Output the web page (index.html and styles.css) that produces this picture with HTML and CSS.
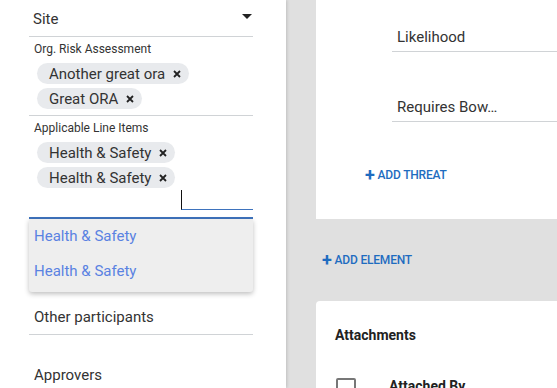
FILE: index.html
```html
<html>
    <head>
        <link rel="stylesheet" href="styles.css">
    </head>
    <body>
        <div class="side">
            <div class="field select">
                <span>Site</span>
                <span class="caret"></span>
            </div>
            <div class="field multi">
                <div class="label">Org. Risk Assessment</div>
                <div class="chips">
                    <span class="chip">Another great ora <svg class="x" viewBox="0 0 8 8"><path d="M1 1L7 7M7 1L1 7"/></svg></span>
                    <span class="chip">Great ORA <svg class="x" viewBox="0 0 8 8"><path d="M1 1L7 7M7 1L1 7"/></svg></span>
                </div>
            </div>
            <div class="field multi active">
                <div class="label">Applicable Line Items</div>
                <div class="chips">
                    <span class="chip">Health &amp; Safety <svg class="x" viewBox="0 0 8 8"><path d="M1 1L7 7M7 1L1 7"/></svg></span>
                    <span class="chip">Health &amp; Safety <svg class="x" viewBox="0 0 8 8"><path d="M1 1L7 7M7 1L1 7"/></svg></span>
                    <span class="typing"></span>
                </div>
            </div>
            <div class="menu">
                <div class="option">Health &amp; Safety</div>
                <div class="option">Health &amp; Safety</div>
            </div>
            <div class="field plain">Other participants</div>
            <div class="field plain last">Approvers</div>
        </div>
        <div class="main">
            <div class="card top">
                <div class="row">Likelihood</div>
                <div class="row">Requires Bow&hellip;</div>
                <div class="add threat"><span class="plus">+</span>ADD THREAT</div>
            </div>
            <div class="add element"><span class="plus">+</span>ADD ELEMENT</div>
            <div class="card bottom">
                <h3>Attachments</h3>
                <div class="head">
                    <span class="check"></span>
                    <span>Attached By</span>
                </div>
            </div>
        </div>
    </body>
</html>
```

FILE: styles.css
```css
body {
    margin: 0;
    display: flex;
    height: 388px;
    overflow: hidden;
    font-family: Roboto, "Liberation Sans", sans-serif;
    color: #333;
    background-color: #e0e0e0;
}
.side {
    width: 286px;
    flex-shrink: 0;
    background: #fff;
    padding-left: 29px;
    box-sizing: border-box;
    box-shadow: 1px 0 3px rgba(0,0,0,0.15);
    position: relative;
    z-index: 1;
}
.field {
    width: 224px;
    border-bottom: 1px solid #d0d3d6;
    box-sizing: border-box;
}
.select {
    display: flex;
    justify-content: space-between;
    align-items: center;
    height: 37px;
    padding: 2px 0 0 4px;
    font-size: 15px;
}
.caret {
    width: 0;
    height: 0;
    border-left: 5px solid transparent;
    border-right: 5px solid transparent;
    border-top: 5px solid #222;
    margin: 0 1px 6px 0;
}
.multi {
    padding: 5px 0 6px 5px;
}
.label {
    font-size: 12px;
    line-height: 14px;
    color: #333;
}
.chips {
    display: flex;
    flex-wrap: wrap;
    gap: 4px;
    padding: 7px 0 0 3px;
}
.chip {
    display: inline-flex;
    align-items: center;
    height: 21px;
    padding: 0 8px 0 12px;
    border-radius: 11px;
    background: #e8eaed;
    font-size: 15px;
    color: #333;
}
.x {
    width: 8px;
    height: 8px;
    margin-left: 8px;
    stroke: #222;
    stroke-width: 1.8;
    fill: none;
}
.active {
    border-bottom: 2px solid #3e73bd;
    padding-bottom: 7px;
}
.typing {
    margin-left: 144px;
    width: 72px;
    height: 19px;
    border-left: 1px solid #111;
    border-bottom: 1px solid #3e73bd;
    margin-top: -2px;
}
.menu {
    width: 224px;
    background: #eeeeee;
    box-shadow: 0 2px 5px rgba(0,0,0,0.25);
    padding-bottom: 3px;
    border-radius: 0 0 3px 3px;
}
.option {
    height: 35px;
    line-height: 35px;
    padding-left: 5px;
    font-size: 15px;
    color: #5a82e2;
}
.plain {
    font-size: 15px;
    padding: 16px 0 8px 5px;
    line-height: 18px;
}
.last {
    border-bottom: none;
    padding-top: 31px;
}
.main {
    flex: 1;
    padding-left: 30px;
}
.card {
    background: #fff;
}
.top {
    height: 219px;
    padding: 28px 0 0 76px;
    box-sizing: border-box;
}
.row {
    border-bottom: 1px solid #d0d3d6;
    font-size: 15px;
    padding: 0 0 5px 5px;
    line-height: 18px;
    margin-bottom: 46px;
}
.add {
    display: flex;
    align-items: center;
    font-size: 12px;
    font-weight: 500;
    color: #1e6cc0;
    letter-spacing: -0.2px;
}
.plus {
    font-size: 18px;
    font-weight: 700;
    margin-right: 3px;
    line-height: 14px;
}
.threat {
    margin-left: -27px;
}
.element {
    height: 82px;
    padding: 0 0 0 6px;
}
.bottom {
    border-radius: 4px 0 0 0;
    padding: 26px 0 0 19px;
    height: 120px;
}
.bottom h3 {
    margin: 0;
    font-size: 14px;
    font-weight: 700;
    color: #222;
}
.head {
    display: flex;
    gap: 33px;
    margin-top: 35px;
    font-size: 14px;
    font-weight: 700;
    color: #222;
}
.check {
    width: 16px;
    height: 16px;
    border: 2px solid #777;
    border-radius: 2px;
    margin-left: 1px;
}
```
